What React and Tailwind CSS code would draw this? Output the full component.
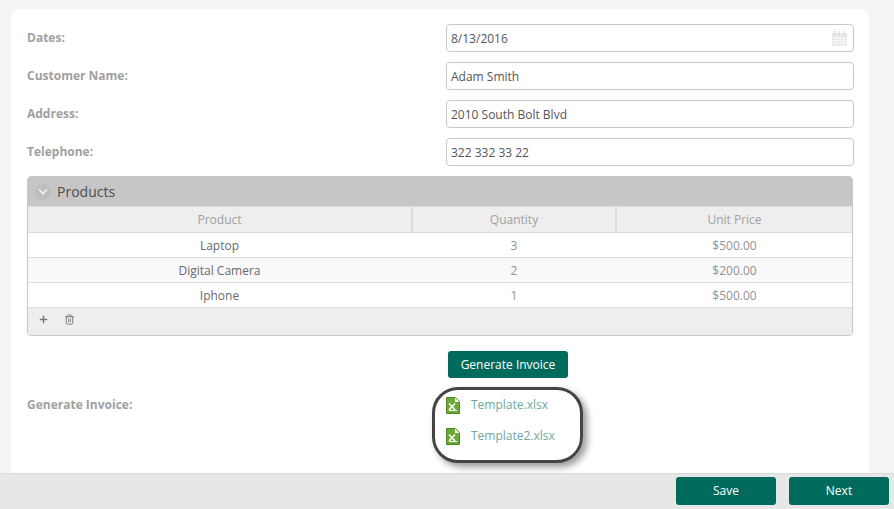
import { Plus, Trash2 } from "lucide-react";

const fields = [
    { label: "Dates:", value: "8/13/2016", calendar: true },
    { label: "Customer Name:", value: "Adam Smith" },
    { label: "Address:", value: "2010 South Bolt Blvd" },
    { label: "Telephone:", value: "322 332 33 22" },
];

const products = [
    { name: "Laptop", qty: 3, price: "$500.00" },
    { name: "Digital Camera", qty: 2, price: "$200.00" },
    { name: "Iphone", qty: 1, price: "$500.00" },
];

function CalendarIcon() {
    return (
        <svg width="17" height="17" viewBox="0 0 17 17" className="absolute right-[5px] top-[5px]">
            <path d="M1 3h15v13H1z" fill="#e6e6e6" />
            <path d="M4 1v4M8.500 1v4M13 1v4" stroke="#d6d6d6" strokeWidth="1" />
            <path d="M1 8h15M1 10.500h15M1 13h15M4 6v10M7 6v10M10 6v10M13 6v10" stroke="#f6f6f6" strokeWidth="1" />
        </svg>
    );
}

function XlsxIcon() {
    return (
        <svg width="14" height="17" viewBox="0 0 14 17" className="shrink-0 mt-[1px]">
            <path d="M.5 .5h9l4 4v12H.5z" fill="#6aa83a" stroke="#4e8a24" />
            <path d="M9 .5l4.500 4.500H9z" fill="#ffffff" />
            <path d="M3 6.500l6 6.500M9 6.500l-6 6.500" stroke="#ffffff" strokeWidth="1.600" />
            <path d="M3 13.500h8" stroke="#ffffff" strokeWidth="1" />
        </svg>
    );
}

export default function App() {
    return (
        <div className="w-[894px] h-[509px] overflow-hidden flex flex-col bg-[#f4f4f4] font-['Open_Sans',sans-serif] text-xs">
            <div className="flex-1 min-h-0 pl-[11px] pr-[25px] pt-[9px]">
                <div className="h-full bg-white rounded-t-lg pl-[16px] pr-[15px] pt-[15px]">
                    <div className="flex flex-col gap-[10px]">
                        {fields.map((f) => (
                            <div key={f.label} className="flex">
                                <label className="w-[419px] pt-[6px] font-bold text-[#a0a0a0]">{f.label}</label>
                                <div className="relative w-[408px] h-[28px] border border-[#c8c8c8] rounded-[4px] pl-[4px] pt-[2px] flex items-center text-[#555]">
                                    {f.value}
                                    {f.calendar && <CalendarIcon />}
                                </div>
                            </div>
                        ))}
                    </div>

                    <div className="mt-[10px] w-[826px] h-[160px] rounded-[4px] border border-[#c6c6c6] overflow-hidden flex flex-col">
                        <div className="h-[29px] bg-[#c6c6c6] flex items-center pl-[7px] gap-[6px] text-sm text-[#4d4d4d]">
                            <span className="w-[16px] h-[16px] rounded-full bg-[#bebebe] flex items-center justify-center">
                                <svg width="10" height="7" viewBox="0 0 10 7" fill="none" stroke="#f4f4f4" strokeWidth="1.600">
                                    <path d="M1 1.500l4 4 4-4" />
                                </svg>
                            </span>
                            Products
                        </div>
                        <div className="flex h-[27px] bg-[#eeeeee] border-y border-[#dcdcdc] text-[#a0a0a0]">
                            <div className="w-[383px] flex items-center justify-center">Product</div>
                            <div className="w-[206px] flex items-center justify-center border-x-[2px] border-[#dcdcdc]">Quantity</div>
                            <div className="flex-1 flex items-center justify-center">Unit Price</div>
                        </div>
                        {products.map((p, i) => (
                            <div key={p.name} className={`flex h-[25px] pt-[2px] border-b border-[#dcdcdc] ${i === 1 ? "bg-[#f9f9f9]" : "bg-white"}`}>
                                <div className="w-[383px] flex items-center justify-center text-[#6a6a6a]">{p.name}</div>
                                <div className="w-[206px] flex items-center justify-center text-[#929292]">{p.qty}</div>
                                <div className="flex-1 flex items-center justify-center text-[#929292]">{p.price}</div>
                            </div>
                        ))}
                        <div className="flex-1 bg-[#eeeeee] flex items-center pl-[10px] gap-[15px] pb-[5px] text-[#777]">
                            <Plus size={11} strokeWidth={3} />
                            <Trash2 size={11} strokeWidth={2} />
                        </div>
                    </div>

                    <div className="mt-[15px] ml-[421px]">
                        <button className="w-[120px] h-[27px] rounded-[3px] bg-[#006b5d] text-white font-medium">Generate Invoice</button>
                    </div>

                    <div className="relative flex mt-[18px]">
                        <span className="w-[419px] pt-[1px] font-bold text-[#a0a0a0]">Generate Invoice:</span>
                        <div className="flex flex-col gap-[14px] text-[#6fa8a0]">
                            <a className="flex gap-[11px] items-start h-[17px]"><XlsxIcon /><span className="mt-[1px]">Template.xlsx</span></a>
                            <a className="flex gap-[11px] items-start h-[17px]"><XlsxIcon /><span className="mt-[1px]">Template2.xlsx</span></a>
                        </div>
                        <div className="absolute left-[405px] top-[-9px] w-[151px] h-[76px] rounded-[26px] border-[3px] border-[#444] shadow-[4px_4px_7px_rgba(0,0,0,0.4)]"></div>
                    </div>
                </div>
            </div>

            <div className="h-[36px] shrink-0 bg-[#e6e7e7] border-t border-[#d9d9d9] flex justify-end items-start pt-[3px] pr-[5px] gap-[13px]">
                <button className="w-[100px] h-[28px] rounded-[3px] bg-[#006b5d] text-white font-medium">Save</button>
                <button className="w-[100px] h-[28px] rounded-[3px] bg-[#006b5d] text-white font-medium">Next</button>
            </div>
        </div>
    );
}
